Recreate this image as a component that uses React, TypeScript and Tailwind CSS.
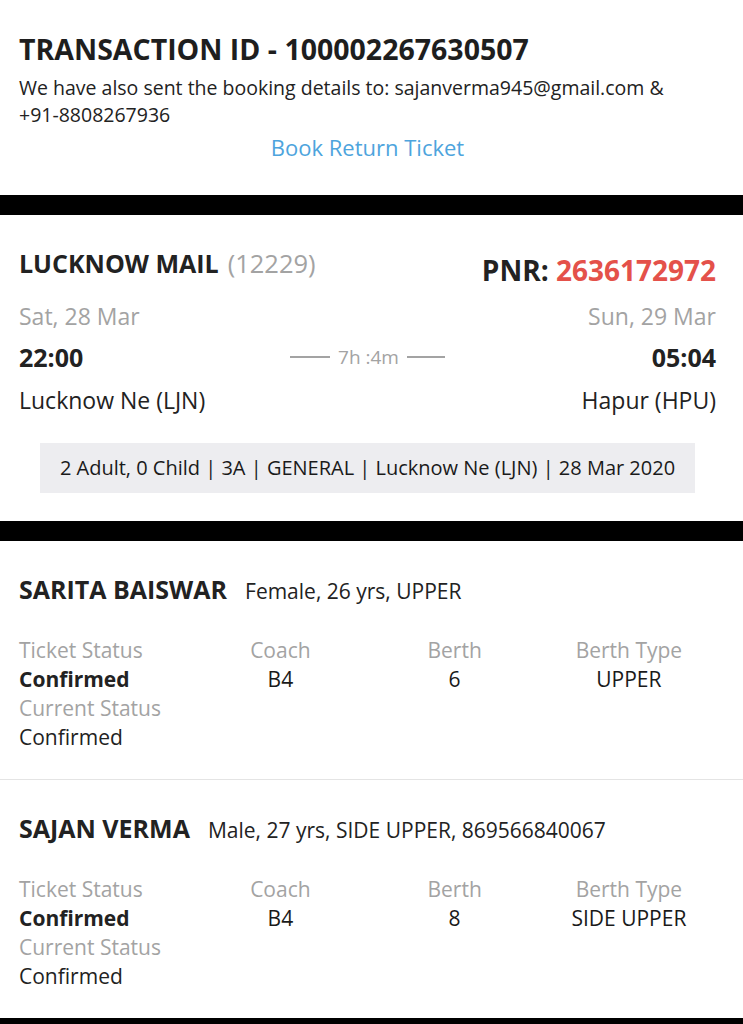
import React from 'react'

const passengers = [
  {
    name: 'SARITA BAISWAR',
    info: 'Female, 26 yrs, UPPER',
    coach: 'B4',
    berth: '6',
    berthType: 'UPPER',
  },
  {
    name: 'SAJAN VERMA',
    info: 'Male, 27 yrs, SIDE UPPER, 869566840067',
    coach: 'B4',
    berth: '8',
    berthType: 'SIDE UPPER',
  },
]

function Passenger({ p, last }: { p: (typeof passengers)[number]; last: boolean }) {
  return (
    <div className={`pl-[19px] pr-[27px] pt-[33px] pb-[27px] ${last ? '' : 'border-b border-[#e4e4e4]'}`}>
      <div className="flex items-baseline gap-[18px] leading-[30px]">
        <span className="text-[25px] font-bold text-[#222]">{p.name}</span>
        <span className="text-[21px] text-[#222]">{p.info}</span>
      </div>
      <div className="mt-[30px] grid grid-cols-4 text-[21px] leading-[29px]">
        <div className="text-[#a3a3a3]">Ticket Status</div>
        <div className="text-center text-[#a3a3a3]">Coach</div>
        <div className="text-center text-[#a3a3a3]">Berth</div>
        <div className="text-center text-[#a3a3a3]">Berth Type</div>
        <div className="font-bold text-[#222]">Confirmed</div>
        <div className="text-center text-[#1a1a1a]">{p.coach}</div>
        <div className="text-center text-[#1a1a1a]">{p.berth}</div>
        <div className="text-center text-[#1a1a1a]">{p.berthType}</div>
        <div className="col-span-4 text-[#a3a3a3]">Current Status</div>
        <div className="col-span-4 text-[#222]">Confirmed</div>
      </div>
    </div>
  )
}

export default function App() {
  return (
    <div className="w-[743px] min-h-[1024px] bg-white font-['Open_Sans',sans-serif] text-[#222]">
      {/* Transaction */}
      <div className="pl-[19px] pr-[27px] pt-[31px] pb-[34px]">
        <h1 className="text-[28.5px] font-bold leading-[36px] text-[#1e1e1e]">
          TRANSACTION ID - 100002267630507
        </h1>
        <p className="mt-[7px] text-[19.5px] leading-[27px]">
          We have also sent the booking details to: sajanverma945@gmail.com &amp;{' '}
          <span className="whitespace-nowrap">+91-8808267936</span>
        </p>
        <p className="mt-[6px] text-center text-[22px] leading-[27px] text-[#4da4dd]">
          Book Return Ticket
        </p>
      </div>
      <div className="h-[20px] bg-black" />

      {/* Journey */}
      <div className="pl-[19px] pr-[27px] pt-[33px] pb-[28px]">
        <div className="flex items-start justify-between">
          <div className="leading-[30px]">
            <span className="text-[25px] font-bold">LUCKNOW MAIL</span>
            <span className="ml-[9px] text-[25.5px] text-[#a3a3a3]">(12229)</span>
          </div>
          <div className="mt-[4px] text-[28px] font-bold leading-[36px]">
            PNR: <span className="text-[#e4514a]">2636172972</span>
          </div>
        </div>
        <div className="mt-[13px] flex justify-between text-[23px] leading-[30px] text-[#a3a3a3]">
          <span>Sat, 28 Mar</span>
          <span>Sun, 29 Mar</span>
        </div>
        <div className="mt-[10px] grid grid-cols-3 items-center leading-[32px]">
          <span className="text-[25px] font-bold">22:00</span>
          <div className="flex items-center justify-center gap-[8px] text-[19px] text-[#a3a3a3]">
            <span className="h-[2px] w-[40px] bg-[#a3a3a3]" />
            <span>7h :4m</span>
            <span className="h-[2px] w-[38px] bg-[#a3a3a3]" />
          </div>
          <span className="text-right text-[25px] font-bold">05:04</span>
        </div>
        <div className="mt-[12px] flex justify-between text-[23px] leading-[30px]">
          <span>Lucknow Ne (LJN)</span>
          <span>Hapur (HPU)</span>
        </div>
        <div className="mx-[21px] mt-[28px] flex h-[50px] items-center justify-center bg-[#ededf0] text-[20px] text-[#1a1a1a]">
          2 Adult, 0 Child | 3A | GENERAL | Lucknow Ne (LJN) | 28 Mar 2020
        </div>
      </div>
      <div className="h-[20px] bg-black" />

      {/* Passengers */}
      {passengers.map((p, i) => (
        <Passenger key={p.name} p={p} last={i === passengers.length - 1} />
      ))}
      <div className="h-[20px] bg-black" />
    </div>
  )
}
